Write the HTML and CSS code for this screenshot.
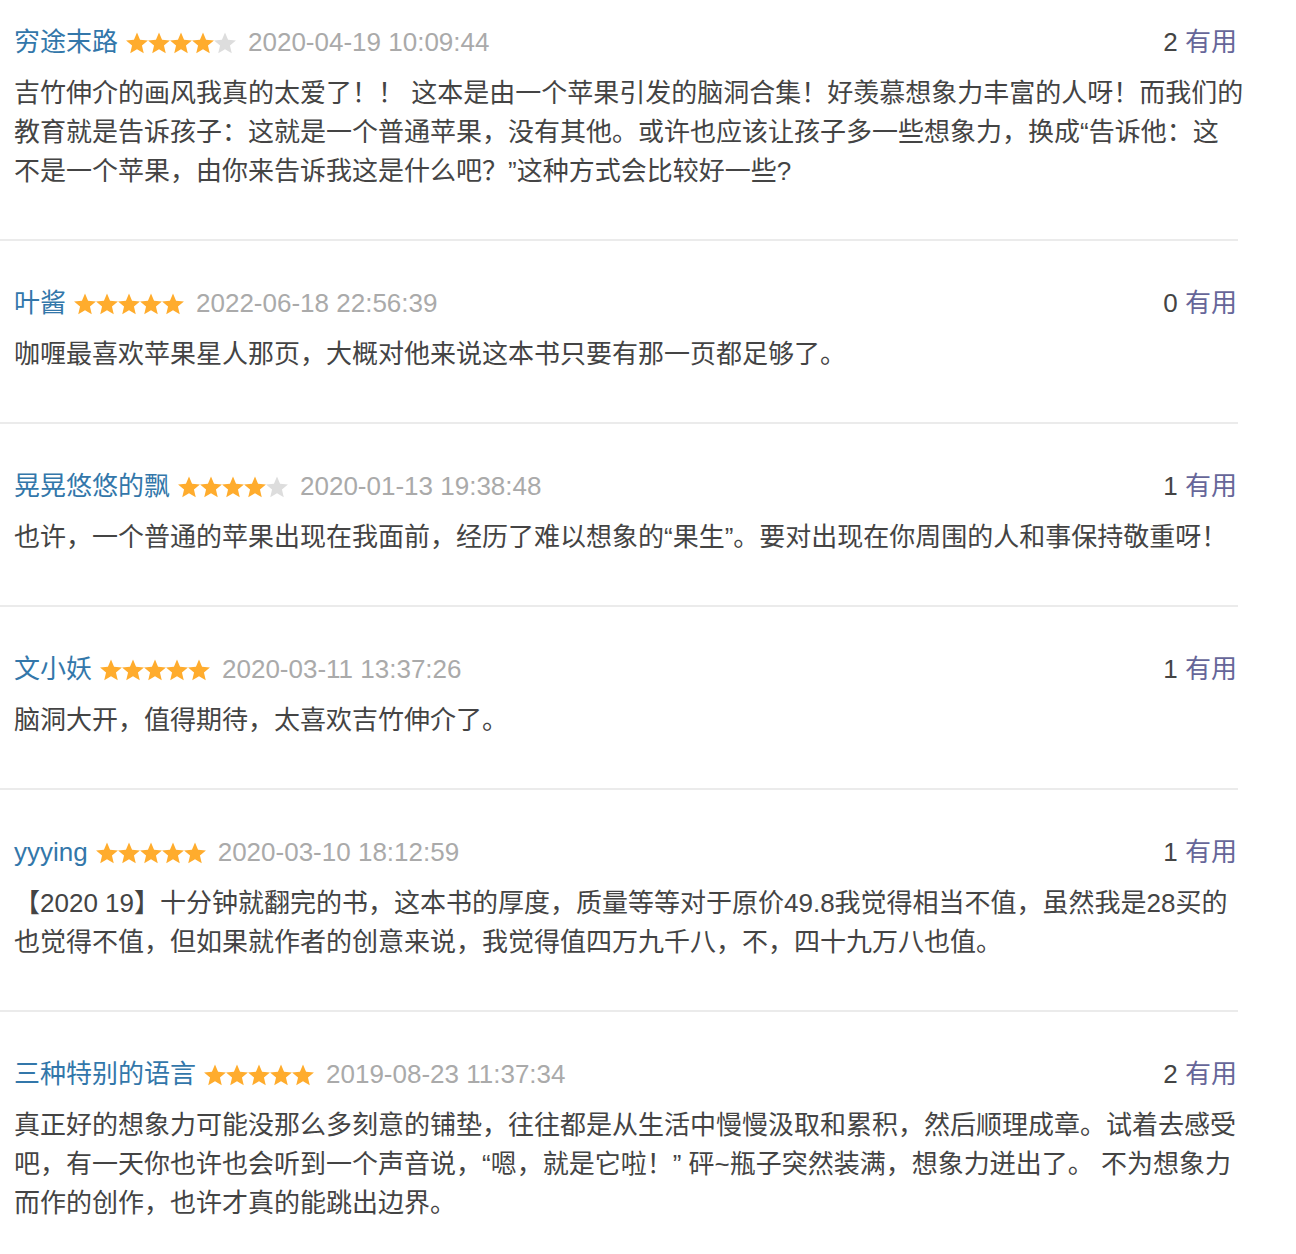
FILE: index.html
```html
<!DOCTYPE html>
<html lang="zh-CN">
<head>
<meta charset="utf-8">
<title>短评</title>
<link rel="stylesheet" href="styles.css">
</head>
<body>
<svg class="sprite" width="0" height="0" aria-hidden="true">
  <defs>
    <polygon id="star" points="11,0.5 14.06,7.79 21.94,8.45 15.95,13.61 17.76,21.3 11,17.2 4.24,21.3 6.05,13.61 0.06,8.45 7.94,7.79"/>
  </defs>
</svg>
<div class="comments">
  <div class="comment">
    <div class="head">
      <a class="name">穷途末路</a>
      <svg class="stars" viewBox="0 0 110 22" width="110" height="22"><use href="#star" x="0" class="on"/><use href="#star" x="22" class="on"/><use href="#star" x="44" class="on"/><use href="#star" x="66" class="on"/><use href="#star" x="88" class="off"/></svg>
      <span class="time">2020-04-19 10:09:44</span>
      <span class="vote"><span class="count">2</span> <a class="useful">有用</a></span>
    </div>
    <p class="text">吉竹伸介的画风我真的太爱了！！ 这本是由一个苹果引发的脑洞合集！好羡慕想象力丰富的人呀！而我们的教育就是告诉孩子：这就是一个普通苹果，没有其他。或许也应该让孩子多一些想象力，换成“告诉他：这不是一个苹果，由你来告诉我这是什么吧？”这种方式会比较好一些?</p>
  </div>
  <div class="comment">
    <div class="head">
      <a class="name">叶酱</a>
      <svg class="stars" viewBox="0 0 110 22" width="110" height="22"><use href="#star" x="0" class="on"/><use href="#star" x="22" class="on"/><use href="#star" x="44" class="on"/><use href="#star" x="66" class="on"/><use href="#star" x="88" class="on"/></svg>
      <span class="time">2022-06-18 22:56:39</span>
      <span class="vote"><span class="count">0</span> <a class="useful">有用</a></span>
    </div>
    <p class="text">咖喱最喜欢苹果星人那页，大概对他来说这本书只要有那一页都足够了。</p>
  </div>
  <div class="comment">
    <div class="head">
      <a class="name">晃晃悠悠的飘</a>
      <svg class="stars" viewBox="0 0 110 22" width="110" height="22"><use href="#star" x="0" class="on"/><use href="#star" x="22" class="on"/><use href="#star" x="44" class="on"/><use href="#star" x="66" class="on"/><use href="#star" x="88" class="off"/></svg>
      <span class="time">2020-01-13 19:38:48</span>
      <span class="vote"><span class="count">1</span> <a class="useful">有用</a></span>
    </div>
    <p class="text">也许，一个普通的苹果出现在我面前，经历了难以想象的“果生”。要对出现在你周围的人和事保持敬重呀！</p>
  </div>
  <div class="comment">
    <div class="head">
      <a class="name">文小妖</a>
      <svg class="stars" viewBox="0 0 110 22" width="110" height="22"><use href="#star" x="0" class="on"/><use href="#star" x="22" class="on"/><use href="#star" x="44" class="on"/><use href="#star" x="66" class="on"/><use href="#star" x="88" class="on"/></svg>
      <span class="time">2020-03-11 13:37:26</span>
      <span class="vote"><span class="count">1</span> <a class="useful">有用</a></span>
    </div>
    <p class="text">脑洞大开，值得期待，太喜欢吉竹伸介了。</p>
  </div>
  <div class="comment">
    <div class="head">
      <a class="name">yyying</a>
      <svg class="stars" viewBox="0 0 110 22" width="110" height="22"><use href="#star" x="0" class="on"/><use href="#star" x="22" class="on"/><use href="#star" x="44" class="on"/><use href="#star" x="66" class="on"/><use href="#star" x="88" class="on"/></svg>
      <span class="time">2020-03-10 18:12:59</span>
      <span class="vote"><span class="count">1</span> <a class="useful">有用</a></span>
    </div>
    <p class="text">【2020 19】十分钟就翻完的书，这本书的厚度，质量等等对于原价49.8我觉得相当不值，虽然我是28买的也觉得不值，但如果就作者的创意来说，我觉得值四万九千八，不，四十九万八也值。</p>
  </div>
  <div class="comment">
    <div class="head">
      <a class="name">三种特别的语言</a>
      <svg class="stars" viewBox="0 0 110 22" width="110" height="22"><use href="#star" x="0" class="on"/><use href="#star" x="22" class="on"/><use href="#star" x="44" class="on"/><use href="#star" x="66" class="on"/><use href="#star" x="88" class="on"/></svg>
      <span class="time">2019-08-23 11:37:34</span>
      <span class="vote"><span class="count">2</span> <a class="useful">有用</a></span>
    </div>
    <p class="text">真正好的想象力可能没那么多刻意的铺垫，往往都是从生活中慢慢汲取和累积，然后顺理成章。试着去感受吧，有一天你也许也会听到一个声音说，“嗯，就是它啦！” 砰~瓶子突然装满，想象力迸出了。 不为想象力而作的创作，也许才真的能跳出边界。</p>
  </div>
</div>
</body>
</html>
```
FILE: styles.css
```css
html, body {
  margin: 0;
  padding: 0;
  background: #fff;
}
body {
  font-family: "Liberation Sans", "Noto Sans CJK SC", sans-serif;
  font-size: 26px;
  color: #444;
  text-spacing-trim: space-all;
}
.sprite {
  position: absolute;
  width: 0;
  height: 0;
  overflow: hidden;
}
.comments {
  width: 1238px;
}
.comment {
  padding: 43px 0 48px;
  border-bottom: 2px solid #ebebeb;
}
.comment:first-child {
  padding-top: 23px;
}
.head {
  display: flex;
  align-items: center;
  height: 39px;
  line-height: 39px;
  padding: 0 1px 0 14px;
  white-space: nowrap;
}
.name {
  color: #3377aa;
  text-decoration: none;
}
.stars {
  display: block;
  margin-left: 8px;
  flex: none;
}
.stars .on {
  fill: #ffac2d;
}
.stars .off {
  fill: #dddddd;
}
.time {
  margin-left: 12px;
  color: #aaaaaa;
}
.vote {
  margin-left: auto;
}
.count {
  color: #444;
}
.useful {
  color: #666699;
  text-decoration: none;
}
.text {
  margin: 12px 0 0 14px;
  width: 1230px;
  line-height: 39px;
}
```
